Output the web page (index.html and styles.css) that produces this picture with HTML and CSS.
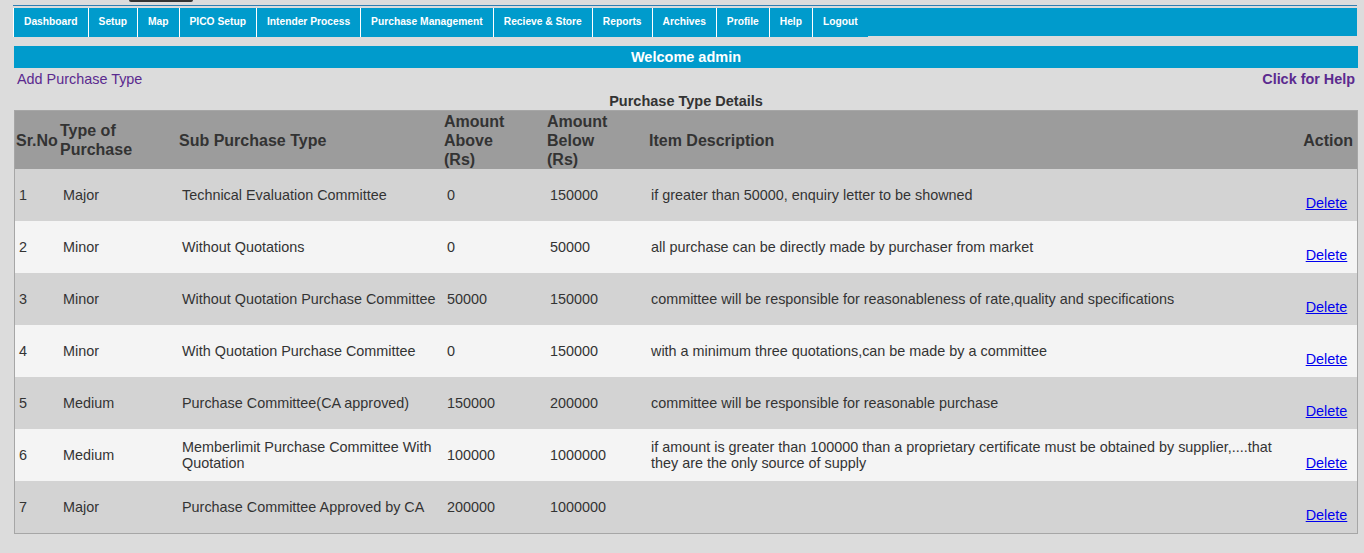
FILE: index.html
```html
<!DOCTYPE html>
<html>
<head>
<meta charset="utf-8">
<title>Purchase Type Details</title>
<link rel="stylesheet" href="styles.css">
</head>
<body>
<div class="top">
  <div class="stub"></div>
</div>
<div class="rule"></div>
<ul class="nav">
  <li>Dashboard</li>
  <li>Setup</li>
  <li>Map</li>
  <li>PICO Setup</li>
  <li>Intender Process</li>
  <li>Purchase Management</li>
  <li>Recieve &amp; Store</li>
  <li>Reports</li>
  <li>Archives</li>
  <li>Profile</li>
  <li>Help</li>
  <li>Logout</li>
</ul>
<div class="content">
  <div class="welcome">Welcome admin</div>
  <div class="links">
    <a class="add" href="#">Add Purchase Type</a>
    <a class="help" href="#">Click for Help</a>
  </div>
  <div class="caption">Purchase Type Details</div>
  <table class="grid">
    <colgroup>
      <col class="c1"><col class="c2"><col class="c3"><col class="c4"><col class="c5"><col class="c6"><col class="c7">
    </colgroup>
    <thead>
      <tr>
        <th>Sr.No</th>
        <th>Type of Purchase</th>
        <th>Sub Purchase Type</th>
        <th>Amount<br>Above<br>(Rs)</th>
        <th>Amount<br>Below<br>(Rs)</th>
        <th>Item Description</th>
        <th class="act">Action</th>
      </tr>
    </thead>
    <tbody>
      <tr class="odd"><td>1</td><td>Major</td><td>Technical Evaluation Committee</td><td>0</td><td>150000</td><td class="desc">if greater than 50000, enquiry letter to be showned</td><td class="act"><a href="#">Delete</a></td></tr>
      <tr class="even"><td>2</td><td>Minor</td><td>Without Quotations</td><td>0</td><td>50000</td><td class="desc">all purchase can be directly made by purchaser from market</td><td class="act"><a href="#">Delete</a></td></tr>
      <tr class="odd"><td>3</td><td>Minor</td><td>Without Quotation Purchase Committee</td><td>50000</td><td>150000</td><td class="desc">committee will be responsible for reasonableness of rate,quality and specifications</td><td class="act"><a href="#">Delete</a></td></tr>
      <tr class="even"><td>4</td><td>Minor</td><td>With Quotation Purchase Committee</td><td>0</td><td>150000</td><td class="desc">with a minimum three quotations,can be made by a committee</td><td class="act"><a href="#">Delete</a></td></tr>
      <tr class="odd"><td>5</td><td>Medium</td><td>Purchase Committee(CA approved)</td><td>150000</td><td>200000</td><td class="desc">committee will be responsible for reasonable purchase</td><td class="act"><a href="#">Delete</a></td></tr>
      <tr class="even"><td>6</td><td>Medium</td><td>Memberlimit Purchase Committee With Quotation</td><td>100000</td><td>1000000</td><td class="desc">if amount is greater than 100000 than a proprietary certificate must be obtained by supplier,....that they are the only source of supply</td><td class="act"><a href="#">Delete</a></td></tr>
      <tr class="odd"><td>7</td><td>Major</td><td>Purchase Committee Approved by CA</td><td>200000</td><td>1000000</td><td class="desc"></td><td class="act"><a href="#">Delete</a></td></tr>
    </tbody>
  </table>
</div>
</body>
</html>
```
FILE: styles.css
```css
html, body {
  margin: 0;
  padding: 0;
}
body {
  background: #dcdcdc;
  font-family: "Liberation Sans", Arial, sans-serif;
  color: #333;
  font-size: 14.4px;
}
.top {
  height: 5px;
  display: flex;
}
.stub {
  margin-left: 129px;
  width: 64px;
  height: 2px;
  background: #333;
  border-radius: 0 0 4px 4px;
}
.rule {
  margin-left: 13px;
  width: 1344px;
  height: 1px;
  background: #2f7fb3;
}
.nav {
  list-style: none;
  margin: 2px 0 0 13px;
  padding: 0;
  width: 1344px;
  height: 28px;
  background: #009bcc;
  display: flex;
}
.nav li {
  border-left: 1px solid #fff;
  padding: 0 10px;
  height: 29px;
  line-height: 28px;
  color: #fff;
  font-weight: bold;
  font-size: 10.25px;
  background: #009bcc;
  white-space: nowrap;
}
.content {
  margin-left: 14px;
  width: 1344px;
  padding-top: 10px;
}
.welcome {
  height: 22px;
  line-height: 22px;
  background: #009bcc;
  color: #fff;
  font-weight: bold;
  font-size: 14.5px;
  text-align: center;
}
.links {
  display: flex;
  justify-content: space-between;
  height: 22px;
  line-height: 22px;
  padding: 0 3px;
}
.links a {
  color: #5b2a8f;
  text-decoration: none;
  font-size: 14.4px;
}
.links .help {
  font-weight: bold;
}
.caption {
  height: 20px;
  line-height: 22px;
  text-align: center;
  font-weight: bold;
  font-size: 14.5px;
}
.grid {
  width: 1344px;
  table-layout: fixed;
  border-collapse: separate;
  border-spacing: 0;
  border: 1px solid #a6a6a6;
}
.c1 { width: 44px; }
.c2 { width: 119px; }
.c3 { width: 265px; }
.c4 { width: 103px; }
.c5 { width: 102px; }
.c6 { width: 650px; }
.c7 { width: 59px; }
.grid th {
  background: #9c9c9c;
  color: #333;
  font-size: 16px;
  font-weight: bold;
  text-align: left;
  padding: 0 1px;
  height: 58px;
  line-height: 19px;
  vertical-align: middle;
}
.grid th.act {
  text-align: right;
  padding: 0 4px 0 0;
}
.grid td {
  padding: 0 3px 0 4px;
  height: 52px;
  vertical-align: middle;
  font-size: 14.4px;
  color: #333;
}
.grid td.desc {
  padding-left: 3px;
}
.grid tr.odd td { background: #d3d3d3; }
.grid tr.even td { background: #f4f4f4; }
.grid td.act {
  text-align: center;
  padding: 16px 2px 0 0;
  box-sizing: border-box;
}
.grid td.act a {
  color: #0000ee;
  text-decoration: underline;
}
```
